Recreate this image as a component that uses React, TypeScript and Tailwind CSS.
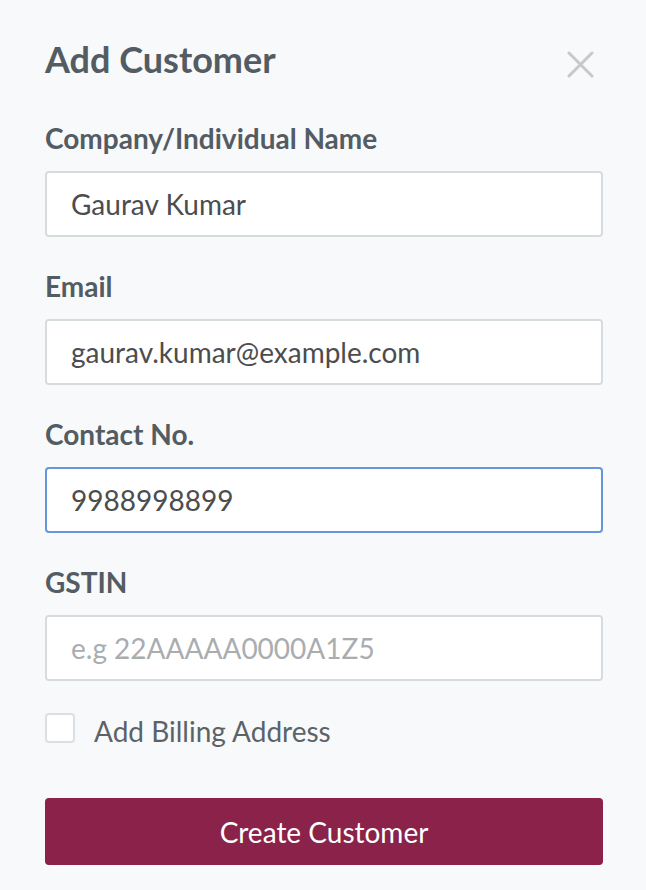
import React, { useState } from 'react';

const Field = ({
	label,
	value,
	placeholder,
	focused,
}: {
	label: string;
	value?: string;
	placeholder?: string;
	focused?: boolean;
}) => {
	const [text, setText] = useState(value ?? '');
	return (
		<div className="flex flex-col">
			<label className="text-[28px] leading-[34px] font-bold text-[#535c62] mb-[16px]">
				{label}
			</label>
			<input
				value={text}
				onChange={(e) => setText(e.target.value)}
				placeholder={placeholder}
				className={
					focused
						? 'h-[66px] w-full bg-white border-2 border-[#6597db] rounded-[4px] pl-[24px] pr-[24px] text-[28px] text-[#4b4d4f] outline-none placeholder:text-[#a9adb0]'
						: 'h-[66px] w-full bg-white border-2 border-[#d6dbdd] rounded-[4px] pl-[24px] pr-[24px] text-[28px] text-[#4b4d4f] outline-none placeholder:text-[#a9adb0]'
				}
			/>
		</div>
	);
};

const App = () => {
	const [billing, setBilling] = useState(false);

	return (
		<div className="min-h-screen bg-[#f8f9fa] font-[Lato,sans-serif] pl-[45px] pr-[43px] pt-[38px]">
			<div className="flex justify-between items-start">
				<h2 className="text-[36px] leading-[43px] font-bold text-[#535c62]">
					Add Customer
				</h2>
				<button className="mt-[13px] mr-[9px]" aria-label="Close">
					<svg width="27" height="27" viewBox="0 0 27 27">
						<path
							d="M2 2 L25 25 M25 2 L2 25"
							stroke="#c6c8ca"
							strokeWidth="3"
							strokeLinecap="round"
						/>
					</svg>
				</button>
			</div>

			<form className="flex flex-col gap-[32px] mt-[40px]">
				<Field label="Company/Individual Name" value="Gaurav Kumar" />
				<Field label="Email" value="gaurav.kumar@example.com" />
				<Field label="Contact No." value="9988998899" focused />
				<Field label="GSTIN" placeholder="e.g 22AAAAA0000A1Z5" />
			</form>

			<label className="flex items-start gap-[19px] mt-[32px] cursor-pointer">
				<span
					onClick={() => setBilling(!billing)}
					className="w-[30px] h-[30px] bg-white border-2 border-[#dcdfe1] rounded-[4px] flex items-center justify-center"
				>
					{billing && (
						<svg width="18" height="18" viewBox="0 0 18 18">
							<path d="M3 9 L7 13 L15 4" stroke="#535c62" strokeWidth="2.5" fill="none" />
						</svg>
					)}
				</span>
				<span className="text-[28px] leading-[34px] text-[#5b6369] pt-[1px]">
					Add Billing Address
				</span>
			</label>

			<button className="mt-[50px] w-full h-[67px] bg-[#8a224a] rounded-[4px] text-white text-[28px] flex items-center justify-center">
				Create Customer
			</button>
		</div>
	);
};

export default App;
